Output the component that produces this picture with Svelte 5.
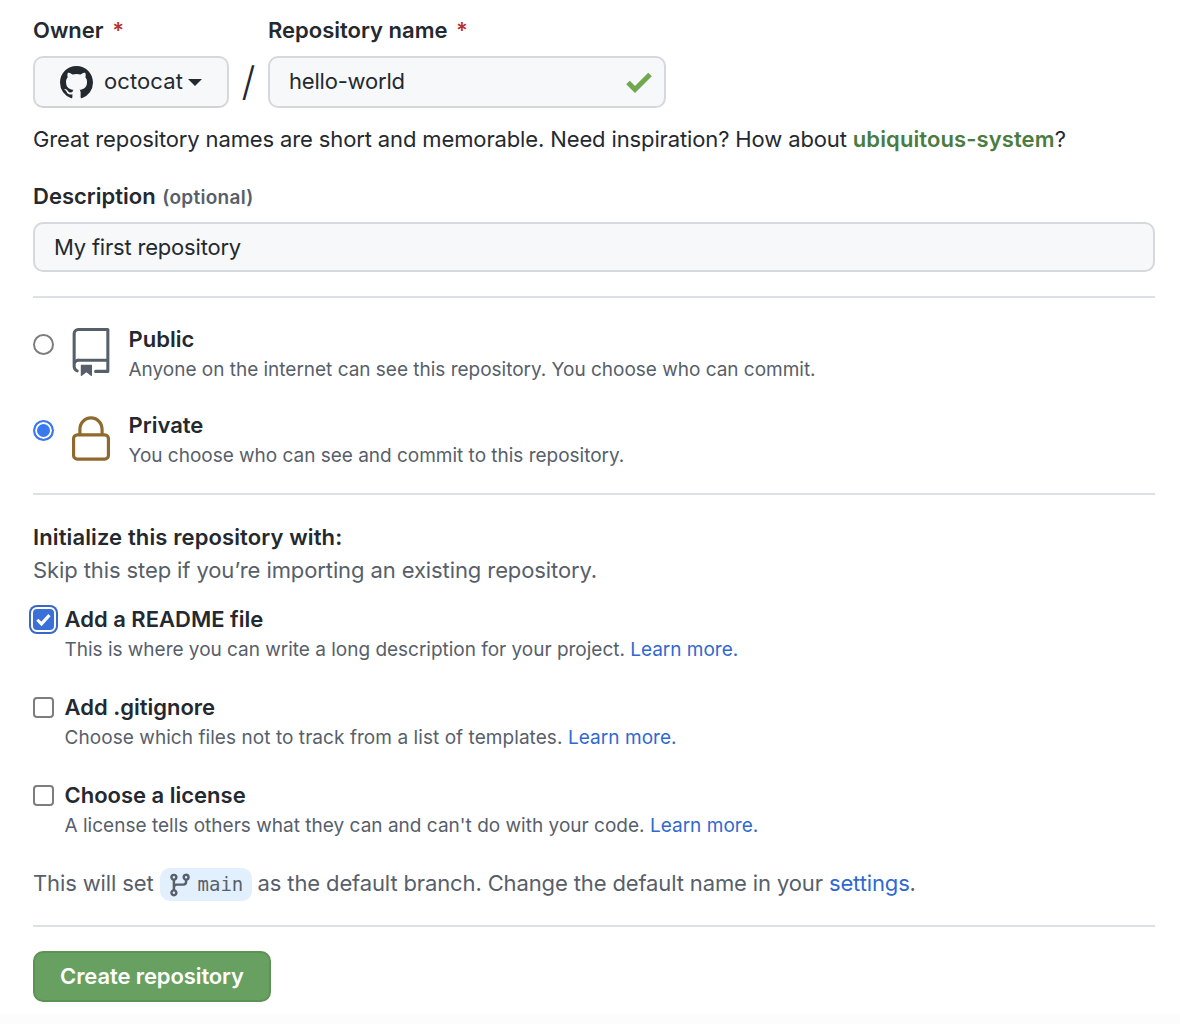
<script>
  const options = [
    { title: 'Add a README file', text: 'This is where you can write a long description for your project.', checked: true, spacing: -0.015 },
    { title: 'Add .gitignore', text: 'Choose which files not to track from a list of templates.', checked: false, spacing: 0.06 },
    { title: 'Choose a license', text: "A license tells others what they can and can't do with your code.", checked: false, spacing: 0.015 }
  ];
</script>

<main class="page">
  <section class="names">
    <div class="owner">
      <div class="label">Owner <span class="req">*</span></div>
      <div class="field select">
        <svg class="avatar" viewBox="0 0 16 16" aria-hidden="true"><path fill="#24292f" d="M8 0c4.42 0 8 3.58 8 8a8.013 8.013 0 0 1-5.45 7.59c-.4.08-.55-.17-.55-.38 0-.27.01-1.13.01-2.2 0-.75-.25-1.23-.54-1.48 1.78-.2 3.65-.88 3.65-3.95 0-.88-.31-1.59-.82-2.15.08-.2.36-1.02-.08-2.12 0 0-.67-.22-2.2.82-.64-.18-1.32-.27-2-.27-.68 0-1.36.09-2 .27-1.53-1.03-2.2-.82-2.2-.82-.44 1.1-.16 1.92-.08 2.12-.51.56-.82 1.28-.82 2.15 0 3.06 1.86 3.75 3.64 3.95-.23.2-.44.55-.51 1.07-.46.21-1.61.55-2.33-.66-.15-.24-.6-.83-1.23-.82-.67.01-.27.38.01.53.34.19.73.9.82 1.13.16.45.68 1.31 2.69.94 0 .67.01 1.3.01 1.49 0 .21-.15.45-.55.38A7.995 7.995 0 0 1 0 8c0-4.42 3.58-8 8-8Z"/></svg>
        <span class="owner-name">octocat</span>
        <span class="caret"></span>
      </div>
    </div>
    <div class="slash">/</div>
    <div class="repo">
      <div class="label">Repository name <span class="req">*</span></div>
      <div class="field input">
        <span class="repo-name">hello-world</span>
        <svg class="check" viewBox="0 0 26 21" aria-hidden="true"><polyline points="2,10.5 9,17.5 24,2.5" fill="none" stroke="#6fa84f" stroke-width="5"/></svg>
      </div>
    </div>
  </section>

  <p class="hint">Great repository names are short and memorable. Need inspiration? How about <b class="suggest">ubiquitous-system</b>?</p>

  <div class="label desc-label">Description <span class="optional">(optional)</span></div>
  <div class="field input desc">My first repository</div>

  <hr class="first" />

  <div class="vis public">
    <span class="radio"></span>
    <svg class="repo-icon" viewBox="3 0 18 24" aria-hidden="true"><path fill="#57606a" d="M3 2.75A2.75 2.75 0 0 1 5.75 0h14.5a.75.75 0 0 1 .75.75v20.5a.75.75 0 0 1-.75.75h-6a.75.75 0 0 1 0-1.5h5.25v-4H6A1.5 1.5 0 0 0 4.5 18v.75c0 .716.43 1.334 1.05 1.605a.75.75 0 0 1-.6 1.374A3.251 3.251 0 0 1 3 18.75ZM19.5 1.5H5.75c-.69 0-1.25.56-1.25 1.25v12.651A2.989 2.989 0 0 1 6 15h13.5Z"/><path fill="#57606a" d="M7 18.25a.25.25 0 0 1 .25-.25h5a.25.25 0 0 1 .25.25v5.01a.25.25 0 0 1-.397.201l-2.206-1.604a.25.25 0 0 0-.294 0L7.397 23.46a.25.25 0 0 1-.397-.2Z"/></svg>
    <div class="vis-text">
      <div class="title">Public</div>
      <div class="sub">Anyone on the internet can see this repository. You choose who can commit.</div>
    </div>
  </div>

  <div class="vis private">
    <span class="radio on"></span>
    <svg class="lock-icon" viewBox="3 1 18 21" aria-hidden="true"><path fill="#8f6a2e" d="M6 9V7.25C6 3.845 8.503 1 12 1s6 2.845 6 6.25V9h.5a2.5 2.5 0 0 1 2.5 2.5v8a2.5 2.5 0 0 1-2.5 2.5h-13A2.5 2.5 0 0 1 3 19.5v-8A2.5 2.5 0 0 1 5.5 9Zm-1.5 2.5v8a1 1 0 0 0 1 1h13a1 1 0 0 0 1-1v-8a1 1 0 0 0-1-1h-13a1 1 0 0 0-1 1Zm3-4.25V9h9V7.25c0-2.67-1.922-4.75-4.5-4.75-2.578 0-4.5 2.08-4.5 4.75Z"/></svg>
    <div class="vis-text">
      <div class="title">Private</div>
      <div class="sub">You choose who can see and commit to this repository.</div>
    </div>
  </div>

  <hr class="second" />

  <div class="title init">Initialize this repository with:</div>
  <div class="skip">Skip this step if you’re importing an existing repository.</div>

  <div class="options">
    {#each options as o}
      <div class="opt">
        <span class="box" class:on={o.checked}>
          {#if o.checked}
            <svg viewBox="0 0 16 16" aria-hidden="true"><polyline points="2.8,8.2 6.3,11.7 13,4.3" fill="none" stroke="#fff" stroke-width="2.6"/></svg>
          {/if}
        </span>
        <div>
          <div class="title">{o.title}</div>
          <div class="sub" style="letter-spacing: {o.spacing}px">{o.text} <span class="link">Learn more.</span></div>
        </div>
      </div>
    {/each}
  </div>

  <div class="branch">
    This will set
    <span class="pill">
      <svg viewBox="0 0 16 16" aria-hidden="true"><path fill="#57606a" d="M9.5 3.25a2.25 2.25 0 1 1 3 2.122V6A2.5 2.5 0 0 1 10 8.5H6a1 1 0 0 0-1 1v1.128a2.251 2.251 0 1 1-1.5 0V5.372a2.25 2.25 0 1 1 1.5 0v1.836A2.493 2.493 0 0 1 6 7h4a1 1 0 0 0 1-1v-.628A2.25 2.25 0 0 1 9.5 3.25Zm-6 0a.75.75 0 1 0 1.5 0 .75.75 0 0 0-1.5 0Zm8.25-.75a.75.75 0 1 0 0 1.5.75.75 0 0 0 0-1.5ZM4.25 12a.75.75 0 1 0 0 1.5.75.75 0 0 0 0-1.5Z"/></svg>
      <span class="mono">main</span>
    </span>
    as the default branch. Change the default name in your <span class="link">settings</span>.
  </div>

  <hr class="third" />

  <button class="create">Create repository</button>
</main>

<style>
  :global(body) {
    margin: 0;
    background: #fff;
  }
  .page {
    box-sizing: border-box;
    width: 1180px;
    height: 1024px;
    padding: 16px 25px 0 33px;
    font-family: Inter, "Liberation Sans", sans-serif;
    font-size: 22px;
    line-height: 30px;
    color: #24292f;
    overflow: hidden;
    letter-spacing: -0.13px;
    background: linear-gradient(#fff 1014px, #fcfcfc 1014px);
  }
  .names {
    display: flex;
  }
  .owner {
    width: 196px;
  }
  .repo {
    width: 398px;
  }
  .label {
    font-weight: 600;
    height: 30px;
    letter-spacing: 0;
    line-height: 29px;
  }
  .req {
    color: #b5332e;
    margin-left: 3px;
  }
  .field {
    box-sizing: border-box;
    border: 2px solid #d5d9de;
    border-radius: 10px;
    background: #f6f8fa;
    margin-top: 10px;
    height: 52px;
    display: flex;
    align-items: center;
    letter-spacing: -0.2px;
  }
  .select {
    padding-left: 25px;
    border-bottom-color: #cfd3d8;
    gap: 11px;
  }
  .owner-name {
    letter-spacing: 0.1px;
    margin-bottom: 2px;
  }
  .repo-name {
    margin-bottom: 2px;
  }
  .avatar {
    width: 33px;
    height: 33px;
    flex: none;
  }
  .caret {
    width: 0;
    height: 0;
    margin-left: -6px;
    border-left: 7px solid transparent;
    border-right: 7px solid transparent;
    border-top: 7px solid #24292f;
  }
  .slash {
    width: 39px;
    margin-top: 40px;
    height: 52px;
    font-size: 40px;
    line-height: 52px;
    font-weight: 300;
    text-align: center;
  }
  .input {
    padding: 0 12px 0 19px;
    justify-content: space-between;
  }
  .check {
    width: 26px;
    height: 21px;
  }
  .hint {
    margin: 15px 0 0;
    height: 32px;
    line-height: 32px;
  }
  .suggest {
    font-weight: 600;
    color: #4a7c3f;
    letter-spacing: 0.1px;
  }
  .desc-label {
    margin-top: 26px;
    line-height: 31px;
  }
  .optional {
    font-size: 19px;
    color: #57606a;
    margin-left: 1px;
    letter-spacing: 0.3px;
  }
  .desc {
    margin-top: 11px;
    height: 50px;
    justify-content: flex-start;
  }
  hr {
    margin: 0;
    border: 0;
    height: 2px;
    background: #dde1e6;
  }
  .first { margin-top: 24px; }
  .second { margin-top: 23px; }
  .third { margin-top: 24px; }
  .vis {
    display: flex;
    position: relative;
  }
  .public { margin-top: 26px; }
  .private { margin-top: 26px; }
  .radio {
    box-sizing: border-box;
    flex: none;
    width: 21px;
    height: 21px;
    border: 2px solid #7d7d7d;
    border-radius: 50%;
    background: #fff;
    margin-top: 10px;
  }
  .radio.on {
    border-color: #3a78ee;
    background: #3a78ee;
    box-shadow: inset 0 0 0 2px #fff;
  }
  .repo-icon {
    width: 38px;
    height: 49px;
    flex: none;
    margin: 4px 0 0 18px;
  }
  .lock-icon {
    width: 38px;
    height: 45px;
    flex: none;
    margin: 6px 0 0 18px;
  }
  .vis-text {
    margin-left: 18.5px;
  }
  .title {
    font-weight: 600;
    height: 30px;
    letter-spacing: 0;
  }
  .sub {
    font-size: 19px;
    color: #57606a;
    height: 30px;
    line-height: 32px;
    letter-spacing: -0.015px;
  }
  .init {
    margin-top: 27px;
    letter-spacing: 0.12px;
  }
  .skip {
    margin-top: 3px;
    color: #57606a;
    height: 30px;
    letter-spacing: -0.1px;
  }
  .options {
    display: flex;
    flex-direction: column;
    gap: 28px;
    margin-top: 19px;
  }
  .opt {
    display: flex;
    gap: 10.5px;
  }
  .box {
    box-sizing: border-box;
    flex: none;
    width: 21px;
    height: 21px;
    margin-top: 5px;
    border: 2px solid #7d7d7d;
    border-radius: 4px;
    background: #fff;
    display: flex;
    align-items: center;
    justify-content: center;
  }
  .box.on {
    background: #3a70d8;
    border-color: #3a70d8;
    outline: 2px solid #fff;
    box-shadow: 0 0 0 4px #3a66c8;
  }
  .box svg {
    width: 19px;
    height: 19px;
    flex: none;
  }
  .link {
    color: #2f69d0;
  }
  .branch {
    margin-top: 28px;
    height: 33px;
    display: flex;
    align-items: flex-start;
    color: #57606a;
    white-space: pre;
    letter-spacing: -0.13px;
  }
  .pill {
    display: inline-flex;
    align-items: center;
    box-sizing: border-box;
    height: 33px;
    width: 92px;
    padding-left: 7px;
    gap: 5px;
    border-radius: 10px;
    background: #e2f0fd;
  }
  .pill svg {
    width: 26px;
    height: 26px;
    flex: none;
  }
  .mono {
    font-family: "DejaVu Sans Mono", "Liberation Mono", monospace;
    font-size: 19px;
    letter-spacing: 0;
    margin-bottom: 2px;
  }
  .create {
    display: block;
    box-sizing: border-box;
    margin-top: 24px;
    width: 238px;
    height: 51px;
    border: 2px solid #5c9355;
    border-radius: 10px;
    background: #67a060;
    color: #fff;
    font: 600 22px/30px Inter, "Liberation Sans", sans-serif;
    letter-spacing: -0.1px;
    padding: 0 0 2px;
  }
</style>
